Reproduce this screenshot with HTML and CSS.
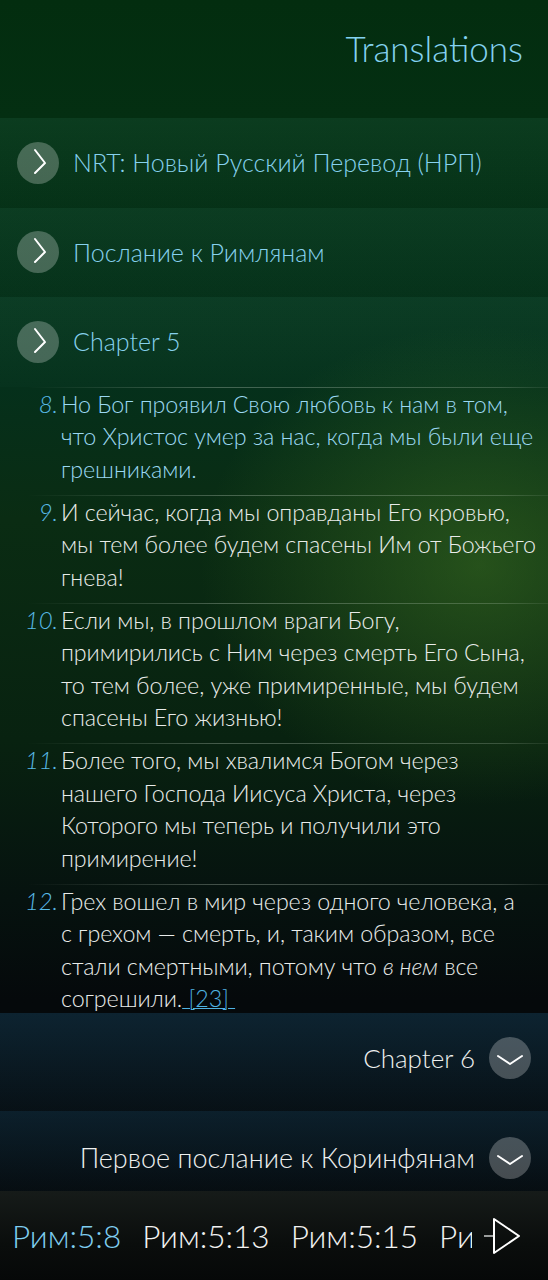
FILE: index.html
```html
<!DOCTYPE html>
<html lang="ru">
<head>
<meta charset="utf-8">
<title>Translations</title>
<link rel="stylesheet" href="styles.css">
</head>
<body>
<div class="screen">
  <header class="page-header">
    <h1 class="title">Translations</h1>
  </header>

  <div class="crumb">
    <span class="circle-btn"><svg viewBox="0 0 42 42"><path d="M18 8 L28 21 L18 31"/></svg></span>
    <span class="crumb-label">NRT: Новый Русский Перевод (НРП)</span>
  </div>
  <div class="crumb">
    <span class="circle-btn"><svg viewBox="0 0 42 42"><path d="M18 8 L28 21 L18 31"/></svg></span>
    <span class="crumb-label">Послание к Римлянам</span>
  </div>
  <div class="crumb">
    <span class="circle-btn"><svg viewBox="0 0 42 42"><path d="M18 8 L28 21 L18 31"/></svg></span>
    <span class="crumb-label">Chapter 5</span>
  </div>

  <div class="verses">
    <div class="verse current">
      <span class="vnum">8.</span>
      <p class="vtext">Но Бог проявил Свою любовь к нам в том,<br>что Христос умер за нас, когда мы были еще<br>грешниками.</p>
    </div>
    <div class="verse">
      <span class="vnum">9.</span>
      <p class="vtext">И сейчас, когда мы оправданы Его кровью,<br>мы тем более будем спасены Им от Божьего<br>гнева!</p>
    </div>
    <div class="verse">
      <span class="vnum">10.</span>
      <p class="vtext">Если мы, в прошлом враги Богу,<br>примирились с Ним через смерть Его Сына,<br>то тем более, уже примиренные, мы будем<br>спасены Его жизнью!</p>
    </div>
    <div class="verse">
      <span class="vnum">11.</span>
      <p class="vtext">Более того, мы хвалимся Богом через<br>нашего Господа Иисуса Христа, через<br>Которого мы теперь и получили это<br>примирение!</p>
    </div>
    <div class="verse">
      <span class="vnum">12.</span>
      <p class="vtext">Грех вошел в мир через одного человека, а<br>с грехом — смерть, и, таким образом, все<br>стали смертными, потому что <em>в нем</em> все<br>согрешили.<a class="note" href="#n23">&nbsp;[23]&nbsp;</a></p>
    </div>
  </div>

  <div class="next-row chapter-next">
    <span class="next-label">Chapter 6</span>
    <span class="circle-btn"><svg viewBox="0 0 42 42"><path d="M9 19 L21 27 L33 19"/></svg></span>
  </div>
  <div class="next-row book-next">
    <span class="next-label">Первое послание к Коринфянам</span>
    <span class="circle-btn"><svg viewBox="0 0 42 42"><path d="M9 19 L21 27 L33 19"/></svg></span>
  </div>

  <nav class="history">
    <div class="history-list">
      <span class="ref active">Рим:5:8</span>
      <span class="ref">Рим:5:13</span>
      <span class="ref">Рим:5:15</span>
      <span class="ref">Рим:5:17</span>
    </div>
    <span class="history-arrow">
      <svg viewBox="0 0 40 40">
        <path class="arrow-tail" d="M1 20 L11 20"/>
        <path class="arrow-head" d="M11 3 L36 20 L11 37 Z"/>
      </svg>
    </span>
  </nav>
</div>
</body>
</html>
```

FILE: styles.css
```css
* {
  box-sizing: border-box;
  margin: 0;
  padding: 0;
}

html, body {
  width: 548px;
  height: 1280px;
}

body {
  overflow: hidden;
  font-family: "Lato", "Open Sans", sans-serif;
  font-weight: 300;
  color: #e9ecea;
  background: #05090a;
}

.screen {
  width: 548px;
  height: 1280px;
  display: flex;
  flex-direction: column;
  background:
    radial-gradient(ellipse 280px 240px at 480px 565px, rgba(80, 140, 40, 0.40), rgba(80, 140, 40, 0) 100%),
    linear-gradient(180deg, #032d0f 0px, #042f12 118px, #05301b 386px, #0a2c13 520px, #082210 740px, #06120f 900px, #05090b 1000px, #05080a 1280px);
}

/* header */
.page-header {
  height: 118px;
  flex: none;
  display: flex;
  justify-content: flex-end;
  padding: 28px 25px 0 0;
}

.title {
  font-size: 35px;
  font-weight: 300;
  line-height: 40px;
  color: #84d2f0;
}

/* breadcrumb rows */
.crumb {
  height: 89.5px;
  flex: none;
  display: flex;
  align-items: center;
  gap: 14px;
  padding-left: 17px;
  background: linear-gradient(180deg, rgba(90, 200, 170, 0.085), rgba(90, 200, 170, 0.015));
}

.circle-btn {
  width: 42px;
  height: 42px;
  flex: none;
  border-radius: 50%;
  background: rgba(255, 255, 255, 0.25);
  display: flex;
}

.circle-btn svg {
  width: 42px;
  height: 42px;
}

.circle-btn path {
  fill: none;
  stroke: #ffffff;
  stroke-width: 2;
  stroke-linecap: round;
  stroke-linejoin: round;
}

.crumb-label {
  font-size: 25px;
  line-height: 1;
  color: #86d1ee;
  white-space: nowrap;
}

/* verses */
.verses {
  height: 626px;
  flex: none;
  overflow: hidden;
}

.verse {
  display: grid;
  grid-template-columns: 58px 1fr;
  column-gap: 3px;
  padding: 0 0 9.5px 0;
  border-top: 1px solid transparent;
  border-image: linear-gradient(90deg, rgba(255, 255, 255, 0) 28px, rgba(210, 225, 210, 0.30) 220px, rgba(210, 225, 210, 0.22) 500px, rgba(255, 255, 255, 0.06) 548px) 1;
  font-size: 23.3px;
  line-height: 32.5px;
  letter-spacing: -0.1px;
}

.vnum {
  font-size: 24px;
  font-style: italic;
  text-align: right;
  color: #58b9e6;
}

.vtext {
  color: #e9ecea;
  white-space: nowrap;
}

.verse.current .vtext {
  color: #9bd8f2;
}

.vtext em {
  font-style: italic;
}

.note {
  color: #4fb3e3;
  text-decoration: underline;
  text-decoration-thickness: 1px;
}

/* next chapter / book rows */
.next-row {
  flex: none;
  display: flex;
  justify-content: flex-end;
  align-items: flex-start;
  gap: 14px;
  padding-right: 17px;
}

.chapter-next {
  height: 98px;
  padding-top: 24px;
  background: linear-gradient(180deg, rgba(25, 75, 105, 0.40), rgba(25, 75, 105, 0.12));
}

.book-next {
  height: 80px;
  padding-top: 26px;
  background: linear-gradient(180deg, rgba(25, 75, 105, 0.35), rgba(25, 75, 105, 0.08));
}

.next-label {
  font-size: 26px;
  line-height: 42px;
  color: #eef0ef;
  white-space: nowrap;
}

.book-next .next-label {
  font-size: 27px;
}

/* history bar */
.history {
  height: 90px;
  flex: none;
  display: flex;
  align-items: center;
  background: linear-gradient(180deg, #161b19 0%, #0a0d0c 60%, #060808 100%);
}

.history-list {
  width: 472px;
  flex: none;
  display: flex;
  gap: 21px;
  padding-left: 12px;
  overflow: hidden;
  white-space: nowrap;
}

.ref {
  font-size: 31.5px;
  color: #f2f2f2;
  flex: none;
}

.ref.active {
  color: #7fcdf0;
}

.history-arrow {
  margin-left: 11px;
  display: flex;
}

.history-arrow svg {
  width: 40px;
  height: 40px;
}

.arrow-tail {
  stroke: #9a9d9c;
  stroke-width: 2;
  fill: none;
}

.arrow-head {
  fill: none;
  stroke: #ffffff;
  stroke-width: 2;
  stroke-linejoin: round;
}
```
